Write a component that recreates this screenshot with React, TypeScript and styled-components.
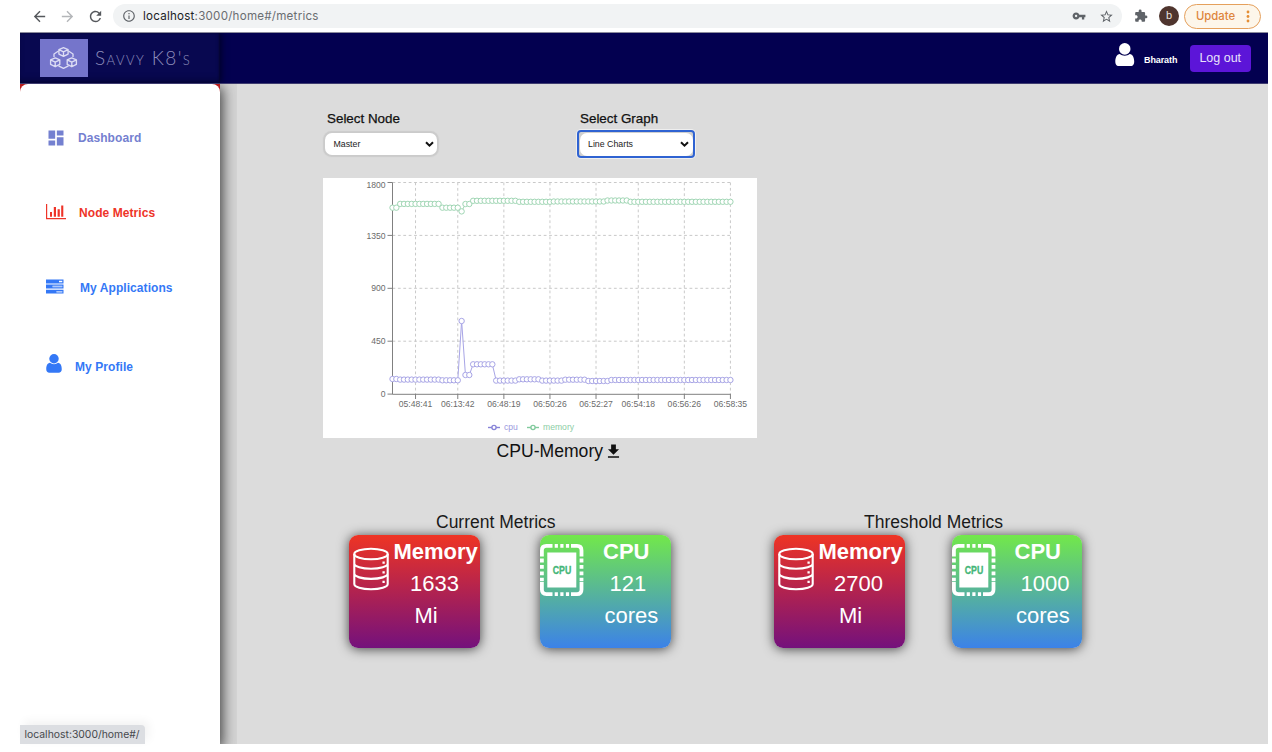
import React from 'react';
import styled, { createGlobalStyle } from 'styled-components';
import {
  MdArrowBack, MdArrowForward, MdRefresh, MdInfoOutline, MdVpnKey,
  MdStarBorder, MdExtension, MdDashboard, MdFileDownload,
} from 'react-icons/md';

const GlobalStyle = createGlobalStyle`
  * { box-sizing: border-box; }
  body { margin: 0; background: #fff; overflow: hidden; font-family: "Liberation Sans", Arial, sans-serif; }
  svg { display: block; flex: none; }
`;

const Window = styled.div`
  width: 1272px;
  height: 752px;
  display: flex;
  flex-direction: column;
  background: #fff;
`;

const BrowserBar = styled.div`
  height: 32px;
  flex: none;
  display: flex;
  align-items: center;
  padding: 0 11px 0 31px;
  color: #5f6368;
`;
const NavIcon = styled.div<{ $faded?: boolean }>`
  width: 28px;
  color: ${p => (p.$faded ? '#b4b6b9' : '#55585c')};
`;
const AddressBar = styled.div`
  width: 1009px;
  height: 24px;
  margin-left: -2px;
  border-radius: 12px;
  background: #f1f3f4;
  display: flex;
  align-items: center;
  padding: 0 8px 0 9px;
`;
const Url = styled.div`
  flex: 1;
  margin-left: 7px;
  font: 11.6px/24px Inter, sans-serif;
  letter-spacing: 0.23px;
  color: #6a6d71;
  b { font-weight: 400; color: #202124; }
`;
const BarActions = styled.div`
  display: flex;
  gap: 13px;
`;
const Extensions = styled.div`
  margin-left: 12px;
`;
const Avatar = styled.div`
  width: 20px;
  height: 20px;
  margin-left: 11px;
  border-radius: 50%;
  background: #4f352e;
  color: #e8e0dd;
  font: 11px/19px Roboto, sans-serif;
  text-align: center;
`;
const UpdatePill = styled.div`
  width: 77px;
  height: 25px;
  margin-left: 5px;
  border: 1px solid #e5a05c;
  border-radius: 13px;
  background: #fdf6ea;
  color: #de853c;
  display: flex;
  align-items: center;
  justify-content: space-between;
  padding: 0 10px 0 11px;
  font: 500 11.3px Inter, sans-serif;
`;

const AppFrame = styled.div`
  position: relative;
  flex: none;
  height: 712px;
  margin: 0 4px 0 20px;
  display: flex;
  flex-direction: column;
  background: #dcdcdc;
`;
const Header = styled.header`
  height: 52px;
  flex: none;
  display: flex;
  align-items: center;
  overflow: hidden;
  background: #030050;
  border-top: 1px solid #8b8b9c;
  border-bottom: 1px solid #3e3c70;
`;
const Brand = styled.div`
  width: 199.5px;
  height: 50px;
  display: flex;
  align-items: center;
  padding-left: 20px;
  background: #080850;
  box-shadow: inset -1px 0 2px #05052f, inset 0 -6px 8px -5px #04042f, 2px 0 6px #01012c;
`;
const Logo = styled.div`
  width: 47.5px;
  height: 37.5px;
  display: flex;
  align-items: center;
  justify-content: center;
  background: #7575cb;
`;
const BrandName = styled.div`
  margin-left: 7.5px;
  font: 300 19px/48px Lato, sans-serif;
  font-variant: small-caps;
  letter-spacing: 1.45px;
  color: #8d8dbb;
  white-space: nowrap;
`;
const Account = styled.div`
  margin-left: auto;
  display: flex;
  align-items: center;
  padding-right: 17.5px;
`;
const AccountIcon = styled.div`
  margin-bottom: 7px;
  color: #fff;
`;
const UserName = styled.div`
  width: 55.5px;
  margin-top: 4px;
  padding-left: 9.5px;
  font-size: 9px;
  font-weight: 700;
  color: #fff;
  letter-spacing: -0.1px;
`;
const LogoutButton = styled.button`
  width: 60.5px;
  height: 27px;
  padding: 0;
  border: 0;
  border-radius: 4px;
  background: #5c15d8;
  color: #e9e3fb;
  font: 12.5px/27px "Liberation Sans", Arial, sans-serif;
`;

const Body = styled.div`
  flex: 1;
  display: flex;
  min-height: 0;
`;
const SideColumn = styled.div`
  width: 217px;
  display: flex;
  overflow: hidden;
  background: #d4d4d4;
`;
const SideBack = styled.div`
  width: 199.5px;
  display: flex;
  background: linear-gradient(#b71c1c 10px, #fff 10px);
  box-shadow: 1px 4px 13px 1px rgba(0, 0, 0, 0.75);
`;
const Sidebar = styled.nav`
  flex: 1;
  border-radius: 8px 8px 0 0;
  background: #fff;
  padding-top: 42.5px;
`;
const NavItem = styled.a<{ $color: string; $gap: number; $bottom: number }>`
  height: 22px;
  margin-bottom: ${p => p.$bottom}px;
  padding-left: 26px;
  display: flex;
  align-items: center;
  gap: ${p => p.$gap}px;
  color: ${p => p.$color};
  font-size: 12px;
  font-weight: 700;
  letter-spacing: 0.07px;
  line-height: 22px;
  white-space: nowrap;
`;
const RaisedIcon = styled.div`
  margin-bottom: 7px;
`;

const Main = styled.main`
  flex: 1;
  padding: 25px 0 0 86px;
`;
const Filters = styled.div`
  display: flex;
  height: 69px;
`;
const Field = styled.div`
  width: 253px;
`;
const FieldLabel = styled.div`
  padding-left: 4px;
  font-size: 13.4px;
  line-height: 20px;
  color: #111;
  -webkit-text-stroke: 0.25px #111;
`;
const SelectRing = styled.div<{ $focused?: boolean }>`
  width: 118px;
  height: 28px;
  margin-top: 1px;
  padding: ${p => (p.$focused ? '0.5px' : '1px')};
  border: 2px solid ${p => (p.$focused ? '#2f63d2' : 'transparent')};
  margin-left: ${p => (p.$focused ? '1px' : '-1px')};
  border-radius: 4px;
  background: ${p => (p.$focused ? '#cfcfcf' : 'none')};
  box-shadow: ${p => (p.$focused ? '0 0 0 1px rgba(255, 255, 255, 0.55)' : 'none')};
`;
const Select = styled.div<{ $flat?: boolean }>`
  height: 100%;
  width: 100%;
  display: flex;
  align-items: center;
  justify-content: space-between;
  border-radius: 7px;
  background: #fff;
  box-shadow: ${p => (p.$flat ? 'none' : '0 0 1px 1.5px #cbcbcb')};
  padding: 0 3.5px 0 8.5px;
  font-size: 8.8px;
  color: #222;
`;
const ChartCard = styled.section`
  width: 434px;
  height: 260px;
  background: #fff;
`;
const ChartTitle = styled.div`
  height: 27px;
  padding-left: 173.5px;
  display: flex;
  align-items: center;
  gap: 1px;
  font-size: 17.6px;
  color: #111;
`;
const MetricsRow = styled.div`
  display: flex;
  margin: 45.5px 0 0 26px;
`;
const MetricGroup = styled.section<{ $width: number }>`
  width: ${p => p.$width}px;
`;
const GroupTitle = styled.h2<{ $left: number }>`
  margin: 0;
  padding-left: ${p => p.$left}px;
  font-size: 17.5px;
  font-weight: 400;
  line-height: 23px;
  height: 24.5px;
  color: #1a1a1a;
`;
const Cards = styled.div<{ $gap: number }>`
  display: flex;
  gap: ${p => p.$gap}px;
`;
const Card = styled.div<{ $kind: 'memory' | 'cpu' }>`
  width: 130.5px;
  height: 113px;
  display: flex;
  border-radius: 9px;
  background: ${p =>
    p.$kind === 'memory'
      ? 'linear-gradient(#ee3424, #74117c)'
      : 'linear-gradient(#72e84a, #3c82e8)'};
  box-shadow: 0 1px 12px rgba(0, 0, 0, 0.7);
  color: #fff;
`;
const CardText = styled.div`
  padding-top: 1px;
  font-size: 22px;
  line-height: 32px;
  white-space: nowrap;
`;
const Line = styled.div<{ $indent: number; $bold?: boolean }>`
  padding-left: ${p => p.$indent}px;
  font-weight: ${p => (p.$bold ? 700 : 400)};
`;
const StatusBubble = styled.div`
  position: absolute;
  left: 0;
  bottom: 0;
  width: 125px;
  height: 19px;
  padding-left: 4.5px;
  border-radius: 0 4px 0 0;
  background: #dcdee2;
  box-shadow: 4px -4px 10px rgba(0, 0, 0, 0.05);
  color: #46484c;
  font: 10.4px/20px Inter, sans-serif;
  white-space: nowrap;
`;

const UserIcon = ({ w, h }: { w: number; h: number }) => (
  <svg width={w} height={h} viewBox="0 0 20 24" preserveAspectRatio="none" fill="currentColor">
    <circle cx="10" cy="6" r="5.9" />
    <path d="M5 11.2C1.6 11.6.3 15 .3 19.2c0 2.8 1.6 4.5 4 4.5h11.4c2.4 0 4-1.7 4-4.5 0-4.2-1.3-7.6-4.7-8-1.3 1.1-3.1 1.7-5 1.7s-3.7-.6-5-1.7z" />
  </svg>
);
const BarsIcon = () => (
  <svg width="20" height="17" viewBox="0 0 20 17" fill="currentColor">
    <path d="M0 0h1.2v14H20v1.3H0zM4 8h2v4.7H4zM7.8 3h2.2v9.7H7.8zM11.6 5.2h2.2v7.5h-2.2zM15.2 1.5h2.1v11.2h-2.1z" />
  </svg>
);
const TasksIcon = () => (
  <svg width="18" height="18" viewBox="0 0 18 18" fill="currentColor">
    <path fillRule="evenodd" d="M0 .5h17.5v3.9H0zM13 1.7v1.5h3.3V1.7zM0 5.6h17.5v3.9H0zM6.5 6.8v1.5h9.8V6.8zM0 10.7h17.5v3.9H0zM10.5 11.9v1.5h5.8v-1.5z" />
    <path d="M6.5 6.8h9.8v1.5H6.5zM10.5 11.9h5.8v1.5h-5.8z" opacity=".4" />
  </svg>
);
const Cube = ({ x, y }: { x: number; y: number }) => (
  <path transform={`translate(${x} ${y})`} d="M0-4.4 4.6-2.4V2.1L0 4.4-4.6 2.1V-2.4zM-4.6-2.4 0-.2 4.6-2.4M0-.2V4.4" />
);
const LogoIcon = () => (
  <svg width="30" height="24" viewBox="0 0 30 24" fill="none" stroke="#dcdcf4" strokeWidth="1.35" strokeLinejoin="round">
    <Cube x={14.5} y={6} />
    <Cube x={6.2} y={16.3} />
    <Cube x={22.8} y={16.3} />
    <path d="M9.5 5 5 8V11M19.5 5 24 8V11M9.5 19.8 14.5 22.4l5-2.6" />
  </svg>
);
const Chevron = () => (
  <svg width="9" height="7" viewBox="0 0 9 7" fill="none" stroke="#111" strokeWidth="2">
    <path d="M1 1.2 4.5 4.7 8 1.2" />
  </svg>
);
const DatabaseIcon = () => (
  <svg width="44" height="60" viewBox="0 0 44 60" fill="none" stroke="#fff" strokeWidth="2.1">
    <ellipse cx="22" cy="19" rx="16.7" ry="5.3" />
    <path d="M5.3 19v30c0 3 7.5 5.2 16.7 5.2S38.7 52 38.7 49V19M5.3 28.5c0 3 7.5 5.3 16.7 5.3s16.7-2.3 16.7-5.3M5.3 38.6c0 3 7.5 5.3 16.7 5.3s16.7-2.3 16.7-5.3" />
    <path d="M34.6 26.5v2.3M34.6 36.3v2.3M34.6 45.7V48" strokeWidth="2.3" />
  </svg>
);
const CpuIcon = () => (
  <svg width="44" height="62" viewBox="0 0 44 62" fill="none" stroke="#fff">
    <path strokeWidth="3.8" d="M1.9 21.5V15.4q0-4.5 4.5-4.5H12.5M31 10.9h6q4.5 0 4.5 4.5V21.5M41.5 47v7.5q0 4.7-4.5 4.7H31M12.5 59.2H6.4q-4.5 0-4.5-4.7V47" />
    <path strokeWidth="3.8" strokeDasharray="3.2 2.4" d="M14.7 10.9h14.5M14.7 59.2h14.5" />
    <path strokeWidth="3.8" strokeDasharray="3.8 2.6" d="M1.9 23.6v22.6M41.5 23.6v22.6" />
    <rect x="7.3" y="17.5" width="29" height="35" fill="#fff" stroke="none" />
    <text x="12.8" y="38.8" textLength="18.5" lengthAdjust="spacingAndGlyphs" fontSize="10" fontWeight="700" fill="#44b678" stroke="#44b678" strokeWidth="0.3" fontFamily="Liberation Sans, sans-serif">CPU</text>
  </svg>
);

const expand = (runs: [number, number][]) => runs.flatMap(([n, y]) => Array<number>(n).fill(y));
const memoryY = expand([[2, 29.7], [11, 25.9], [5, 29.7], [1, 33.4], [2, 26], [12, 22.8], [9, 23.8], [14, 23.5], [6, 22.5], [27, 23.8]]);
const cpuY = expand([[2, 201], [11, 201.6], [5, 202.3], [1, 143], [2, 197], [6, 186.3], [6, 202.6], [6, 201.3], [6, 202.6], [6, 201.7], [6, 203], [32, 202]]);
const STEP = 3.84;
const LEFT = 69.5;
const RIGHT = LEFT + 88 * STEP;
const xTicks: [number, string][] = [
  [6, '05:48:41'], [17, '06:13:42'], [29, '06:48:19'], [41, '06:50:26'],
  [53, '06:52:27'], [64, '06:54:18'], [76, '06:56:26'], [88, '06:58:35'],
];
const yTicks = [1800, 1350, 900, 450, 0];

const Series = ({ ys, color }: { ys: number[]; color: string }) => (
  <g stroke={color} strokeWidth="1" fill="none">
    <polyline points={ys.map((y, i) => `${LEFT + i * STEP},${y}`).join(' ')} />
    {ys.map((y, i) => (
      <circle key={i} cx={LEFT + i * STEP} cy={y} r="2.7" fill="#fff" />
    ))}
  </g>
);
const LegendMark = ({ x, color }: { x: number; color: string }) => (
  <g stroke={color} strokeWidth="1.4" fill="#fff">
    <path d={`M${x} 249.5h12`} />
    <circle cx={x + 6} cy="249.5" r="2.1" />
  </g>
);
const LineChart = () => (
  <svg width="434" height="260" viewBox="0 0 434 260" fontFamily="Liberation Sans, sans-serif" fontSize="8.6">
    <g stroke="#c9c9c9" strokeWidth="1" strokeDasharray="2.8 2.6">
      {yTicks.slice(0, 4).map((v, i) => <path key={v} d={`M${LEFT} ${4.5 + i * 52.9}H${RIGHT}`} />)}
      {xTicks.map(([i]) => <path key={i} d={`M${LEFT + i * STEP} 4.5V216`} />)}
    </g>
    <g stroke="#808080" strokeWidth="1">
      <path d={`M${LEFT} 4.5V216.3H${RIGHT}`} fill="none" />
      {yTicks.map((v, i) => <path key={v} d={`M${LEFT - 5} ${4.5 + i * 52.9}h5`} />)}
      {xTicks.map(([i]) => <path key={i} d={`M${LEFT + i * STEP} 216v5`} />)}
    </g>
    <g fill="#6b6b6b">
      {yTicks.map((v, i) => (
        <text key={v} x="62.5" y={(i === 0 ? 9.6 : 7.6) + i * 52.9} textAnchor="end">{v}</text>
      ))}
      {xTicks.map(([i, label]) => (
        <text key={i} x={LEFT + i * STEP} y="229.3" textAnchor="middle">{label}</text>
      ))}
    </g>
    <Series ys={cpuY} color="#a8a5e6" />
    <Series ys={memoryY} color="#a0d6b4" />
    <LegendMark x={165} color="#8884d8" />
    <text x="181" y="252.3" fill="#9c99de">cpu</text>
    <LegendMark x={204} color="#82ca9d" />
    <text x="220" y="252.3" fill="#8ccea5">memory</text>
  </svg>
);

type MetricProps = { value: string; indents: [number, number, number] };
const MemoryCard = ({ value, indents }: MetricProps) => (
  <Card $kind="memory">
    <DatabaseIcon />
    <CardText>
      <Line $bold $indent={indents[0]}>Memory</Line>
      <Line $indent={indents[1]}>{value}</Line>
      <Line $indent={indents[2]}>Mi</Line>
    </CardText>
  </Card>
);
const CpuCard = ({ value, indents }: MetricProps) => (
  <Card $kind="cpu">
    <CpuIcon />
    <CardText>
      <Line $bold $indent={indents[0]}>CPU</Line>
      <Line $indent={indents[1]}>{value}</Line>
      <Line $indent={indents[2]}>cores</Line>
    </CardText>
  </Card>
);

export default function App() {
  return (
    <Window>
      <GlobalStyle />
      <BrowserBar>
        <NavIcon><MdArrowBack size={17} /></NavIcon>
        <NavIcon $faded><MdArrowForward size={17} /></NavIcon>
        <NavIcon><MdRefresh size={17} /></NavIcon>
        <AddressBar>
          <MdInfoOutline size={14} />
          <Url><b>localhost</b>:3000/home#/metrics</Url>
          <BarActions>
            <MdVpnKey size={14} />
            <MdStarBorder size={15} />
          </BarActions>
        </AddressBar>
        <Extensions><MdExtension size={14} /></Extensions>
        <Avatar>b</Avatar>
        <UpdatePill>
          Update
          <svg width="4" height="13" viewBox="0 0 4 13" fill="#e58e35">
            <circle cx="2" cy="2" r="1.4" /><circle cx="2" cy="6.5" r="1.4" /><circle cx="2" cy="11" r="1.4" />
          </svg>
        </UpdatePill>
      </BrowserBar>
      <AppFrame>
        <Header>
          <Brand>
            <Logo><LogoIcon /></Logo>
            <BrandName>Savvy K8's</BrandName>
          </Brand>
          <Account>
            <AccountIcon><UserIcon w={19.5} h={23.5} /></AccountIcon>
            <UserName>Bharath</UserName>
            <LogoutButton>Log out</LogoutButton>
          </Account>
        </Header>
        <Body>
          <SideColumn>
            <SideBack>
              <Sidebar>
                <NavItem $color="#7480d0" $gap={12} $bottom={53}><MdDashboard size={20} />Dashboard</NavItem>
                <NavItem $color="#ee3428" $gap={13} $bottom={53}><BarsIcon />Node Metrics</NavItem>
                <NavItem $color="#3478f6" $gap={16} $bottom={57.5}><TasksIcon />My Applications</NavItem>
                <NavItem $color="#3478f6" $gap={13} $bottom={0}><RaisedIcon><UserIcon w={16} h={19} /></RaisedIcon>My Profile</NavItem>
              </Sidebar>
            </SideBack>
          </SideColumn>
          <Main>
            <Filters>
              <Field>
                <FieldLabel>Select Node</FieldLabel>
                <SelectRing><Select>Master<Chevron /></Select></SelectRing>
              </Field>
              <Field>
                <FieldLabel>Select Graph</FieldLabel>
                <SelectRing $focused><Select $flat>Line Charts<Chevron /></Select></SelectRing>
              </Field>
            </Filters>
            <ChartCard><LineChart /></ChartCard>
            <ChartTitle>CPU-Memory<MdFileDownload size={19} /></ChartTitle>
            <MetricsRow>
              <MetricGroup $width={425}>
                <GroupTitle $left={87}>Current Metrics</GroupTitle>
                <Cards $gap={60.5}>
                  <MemoryCard value="1633" indents={[0.5, 17, 21.5]} />
                  <CpuCard value="121" indents={[19, 25.5, 20.5]} />
                </Cards>
              </MetricGroup>
              <MetricGroup $width={310}>
                <GroupTitle $left={90}>Threshold Metrics</GroupTitle>
                <Cards $gap={47}>
                  <MemoryCard value="2700" indents={[0.5, 16, 21]} />
                  <CpuCard value="1000" indents={[19, 25, 20.5]} />
                </Cards>
              </MetricGroup>
            </MetricsRow>
          </Main>
        </Body>
        <StatusBubble>localhost:3000/home#/</StatusBubble>
      </AppFrame>
    </Window>
  );
}
